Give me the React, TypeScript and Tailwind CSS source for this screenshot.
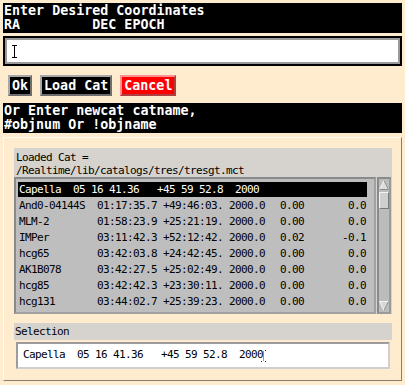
import React from 'react';

const mono = { fontFamily: '"DejaVu Sans Mono", "Liberation Mono", monospace' };

interface CatRow {
  name: string;
  ra: string;
  dec: string;
  epoch: string;
  pm1: string;
  pm2: string;
}

const rows: CatRow[] = [
  { name: 'And0-04144S', ra: '01:17:35.7', dec: '+49:46:03.', epoch: '2000.0', pm1: '0.00', pm2: '0.0' },
  { name: 'MLM-2', ra: '01:58:23.9', dec: '+25:21:19.', epoch: '2000.0', pm1: '0.00', pm2: '0.0' },
  { name: 'IMPer', ra: '03:11:42.3', dec: '+52:12:42.', epoch: '2000.0', pm1: '0.02', pm2: '-0.1' },
  { name: 'hcg65', ra: '03:42:03.8', dec: '+24:42:45.', epoch: '2000.0', pm1: '0.00', pm2: '0.0' },
  { name: 'AK1B078', ra: '03:42:27.5', dec: '+25:02:49.', epoch: '2000.0', pm1: '0.00', pm2: '0.0' },
  { name: 'hcg85', ra: '03:42:42.3', dec: '+23:30:11.', epoch: '2000.0', pm1: '0.00', pm2: '0.0' },
  { name: 'hcg131', ra: '03:44:02.7', dec: '+25:39:23.', epoch: '2000.0', pm1: '0.00', pm2: '0.0' },
];

function Banner({ lines }: { lines: string[] }) {
  return (
    <div className="bg-black text-white h-[30px] pl-[1px] pt-[1px] font-bold text-[13.33px] leading-[14px] whitespace-pre" style={mono}>
      {lines.map((l) => (
        <div key={l}>{l}</div>
      ))}
    </div>
  );
}

function XButton({ label, red }: { label: string; red?: boolean }) {
  return (
    <button
      className={`h-[21px] px-[2px] border-2 font-bold text-[13.33px] leading-none whitespace-pre ${
        red
          ? 'bg-[#ff0000] text-white border-t-[#ff9090] border-l-[#ff9090] border-b-[#b04040] border-r-[#b04040]'
          : 'bg-black text-white border-t-[#a8a8a8] border-l-[#a8a8a8] border-b-[#6e6e6e] border-r-[#6e6e6e]'
      }`}
      style={mono}
    >
      {label}
    </button>
  );
}

export default function App() {
  return (
    <div className="w-[405px] h-[385px] bg-[#ffebcd] p-[3px] flex flex-col overflow-hidden">
      <Banner lines={['Enter Desired Coordinates', 'RA         DEC EPOCH']} />

      <div className="mt-[3px] h-[30px] border-2 border-black">
        <div className="h-full border-2 border-[#9a9a9a] bg-white flex items-center pl-[5px]">
          <svg width="5" height="13" viewBox="0 0 5 13">
            <path d="M0 0.5h5M2.5 0.5v12M0 12.5h5" stroke="#000" strokeWidth="1" fill="none" />
          </svg>
        </div>
      </div>

      <div className="mt-[9px] ml-[5px] flex gap-[8px]">
        <XButton label="Ok" />
        <XButton label="Load Cat" />
        <XButton label="Cancel" red />
      </div>

      <div className="mt-[7px]">
        <Banner lines={['Or Enter newcat catname,', '#objnum Or !objname']} />
      </div>

      <div className="mt-[4px] h-[244px] border border-t-[#fffaf2] border-l-[#fffaf2] border-b-[#8b7d6b] border-r-[#8b7d6b] pl-[10px] pr-[9px] pt-[10px]">
        <div className="bg-[#d6d3ce]">
          <div className="h-[29px] pl-[2px] pt-[3px] text-[11px] leading-[13px] tracking-[-0.62px] text-black whitespace-pre" style={mono}>
            <div>Loaded Cat =</div>
            <div>/Realtime/lib/catalogs/tres/tresgt.mct</div>
          </div>
          <div className="flex h-[137px]">
            <div className="w-[362px] border-2 border-t-[#8a8a8a] border-l-[#8a8a8a] border-b-[#a0a0a0] border-r-[#a0a0a0] bg-[#bebebe] pt-[3px] pl-[2px] pr-[7px] text-[11px] tracking-[-0.62px] overflow-hidden" style={mono}>
              <div className="h-[15px] bg-black text-white pl-[1px] leading-[15px] whitespace-pre">
                Capella  05 16 41.36   +45 59 52.8  2000
              </div>
              {rows.map((r) => (
                <div key={r.name} className="h-[16px] flex pl-[1px] pr-[1px] leading-[18px] text-black whitespace-pre">
                  <span className="w-[78px]">{r.name}</span>
                  <span className="w-[66px]">{r.ra}</span>
                  <span className="w-[66px]">{r.dec}</span>
                  <span className="w-[51px]">{r.epoch}</span>
                  <span className="w-[52px]">{r.pm1}</span>
                  <span className="flex-1 text-right">{r.pm2}</span>
                </div>
              ))}
            </div>
            <div className="ml-[1px] w-[14px] border-2 border-t-[#8a8a8a] border-l-[#8a8a8a] border-b-[#9a9a9a] border-r-[#9a9a9a] bg-[#bcbcbc] flex flex-col items-center">
              <svg width="10" height="10" viewBox="0 0 10 10" className="mt-[1px]">
                <path d="M5 0.5 L9.5 9.5 H0.5 Z" fill="#dcdcdc" stroke="#f4f4f4" strokeWidth="1" />
                <path d="M5 0.5 L9.5 9.5 H0.5" fill="none" stroke="#8a8a8a" strokeWidth="1" />
              </svg>
              <div className="mt-[2px] w-[10px] h-[17px] bg-[#cfcfcf] border border-t-[#f4f4f4] border-l-[#f4f4f4] border-b-[#7a7a7a] border-r-[#7a7a7a]" />
              <div className="flex-1" />
              <svg width="10" height="10" viewBox="0 0 10 10" className="mb-[1px]">
                <path d="M0.5 0.5 H9.5 L5 9.5 Z" fill="#d8d8d8" stroke="#f4f4f4" strokeWidth="1" />
                <path d="M9.5 0.5 L5 9.5" fill="none" stroke="#8a8a8a" strokeWidth="1" />
              </svg>
            </div>
          </div>
        </div>

        <div className="mt-[9px] bg-[#d6d3ce] h-[17px] pl-[1px] text-[11px] leading-[18px] tracking-[-0.62px] text-black" style={mono}>
          Selection
        </div>
        <div className="mt-[2px] mx-[2px] h-[27px] border-2 border-t-[#9c9c9c] border-l-[#9c9c9c] border-b-[#cfcfcf] border-r-[#cfcfcf] bg-white flex items-center pl-[5px] text-[11px] tracking-[-0.62px] text-black whitespace-pre" style={mono}>
          <span>Capella  05 16 41.36   +45 59 52.8  2000</span>
          <svg width="5" height="12" viewBox="0 0 5 12" className="-ml-[2px]">
            <path d="M0 0.5h1M4 0.5h1M2.5 1.5v9M0 11.5h1M4 11.5h1" stroke="#333" strokeWidth="1" strokeDasharray="1 1" fill="none" />
          </svg>
        </div>
      </div>
    </div>
  );
}
